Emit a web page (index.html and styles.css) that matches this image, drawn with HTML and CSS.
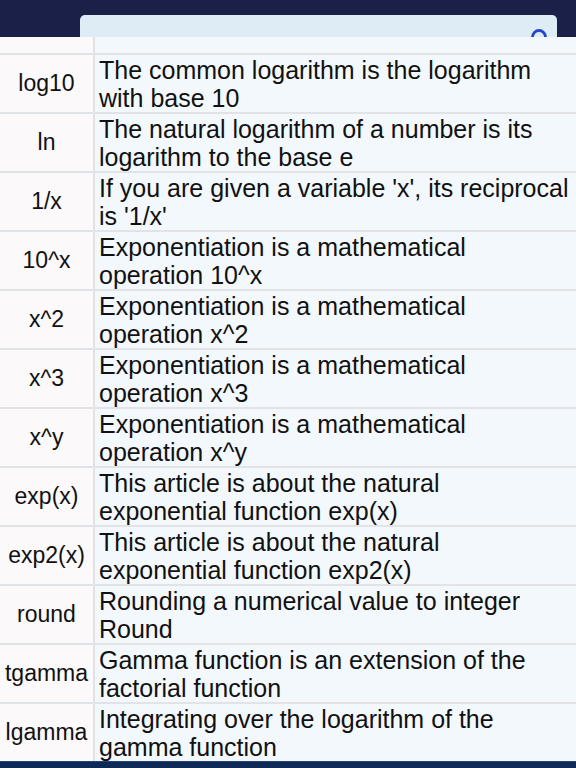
FILE: index.html
```html
<!DOCTYPE html>
<html>
<head>
<meta charset="utf-8">
<link rel="stylesheet" href="styles.css">
</head>
<body>
<div class="screen">
  <header class="top">
    <div class="search">
      <svg class="spin" width="18" height="11" viewBox="0 0 18 11"><path d="M2.5 11 A6.5 6.5 0 0 1 15.5 11" fill="none" stroke="#2646c9" stroke-width="2.8"/></svg>
    </div>
  </header>
  <main class="table">
    <div class="row partial"><div class="name"></div><div class="desc"></div></div>
    <div class="row"><div class="name">log10</div><div class="desc">The common logarithm is the logarithm with base 10</div></div>
    <div class="row"><div class="name">ln</div><div class="desc">The natural logarithm of a number is its logarithm to the base e</div></div>
    <div class="row"><div class="name">1/x</div><div class="desc">If you are given a variable 'x', its reciprocal is '1/x'</div></div>
    <div class="row"><div class="name">10^x</div><div class="desc">Exponentiation is a mathematical operation 10^x</div></div>
    <div class="row"><div class="name">x^2</div><div class="desc">Exponentiation is a mathematical operation x^2</div></div>
    <div class="row"><div class="name">x^3</div><div class="desc">Exponentiation is a mathematical operation x^3</div></div>
    <div class="row"><div class="name">x^y</div><div class="desc">Exponentiation is a mathematical operation x^y</div></div>
    <div class="row"><div class="name">exp(x)</div><div class="desc">This article is about the natural exponential function exp(x)</div></div>
    <div class="row"><div class="name">exp2(x)</div><div class="desc">This article is about the natural exponential function exp2(x)</div></div>
    <div class="row"><div class="name">round</div><div class="desc">Rounding a numerical value to integer Round</div></div>
    <div class="row"><div class="name">tgamma</div><div class="desc">Gamma function is an extension of the factorial function</div></div>
    <div class="row"><div class="name">lgamma</div><div class="desc">Integrating over the logarithm of the gamma function</div></div>
  </main>
  <footer class="bottom"></footer>
</div>
</body>
</html>
```
FILE: styles.css
```css
html, body {
  margin: 0;
  padding: 0;
}
body {
  background: #1b2049;
  font-family: "Liberation Sans", Arial, sans-serif;
  color: #111;
}
.screen {
  width: 576px;
  height: 768px;
  display: flex;
  flex-direction: column;
  overflow: hidden;
}
.top {
  height: 37px;
  flex: none;
  display: flex;
  align-items: flex-end;
}
.search {
  margin-left: 80px;
  width: 477px;
  height: 22px;
  background: #deecf6;
  border-radius: 5px 5px 0 0;
  display: flex;
  justify-content: flex-end;
  align-items: flex-end;
}
.spin {
  margin-right: 9px;
  display: block;
}
.table {
  flex: none;
  height: 724px;
  overflow: hidden;
  display: flex;
  flex-direction: column;
}
.row {
  flex: none;
  display: grid;
  grid-template-columns: 95px 1fr;
  height: 57px;
  border-bottom: 2px solid #e2e3e6;
}
.row.partial {
  height: 16px;
}
.name {
  background: #fbf9fa;
  border-right: 2px solid #e2e2e4;
  font-size: 23px;
  display: flex;
  align-items: center;
  justify-content: center;
  white-space: nowrap;
}
.desc {
  background: #f3f8fc;
  font-size: 25px;
  line-height: 27.5px;
  padding: 2px 5px 0 4px;
}
.bottom {
  flex: none;
  height: 7px;
  background: #0f2957;
  border-top: 1px solid #22447a;
}
```
